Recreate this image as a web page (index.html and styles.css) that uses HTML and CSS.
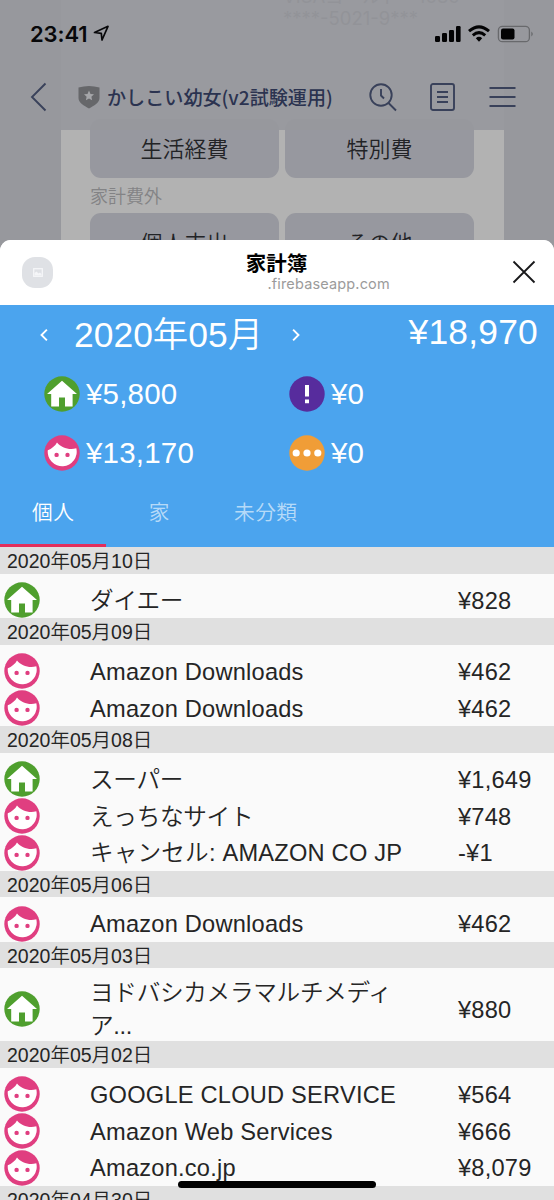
FILE: index.html
```html
<!DOCTYPE html>
<html lang="ja">
<head>
<meta charset="utf-8">
<title>家計簿</title>
<link rel="stylesheet" href="styles.css">
</head>
<body>
<svg width="0" height="0" class="defs">
  <symbol id="home" viewBox="0 0 36 36"><circle cx="18" cy="18" r="17.7" fill="#4f9f2e"/><path d="M18 4.800L3 18h4.200v12.500h7.800v-9h6v9h7.600V18H33z" fill="#fff"/></symbol>
  <symbol id="face" viewBox="0 0 36 36"><circle cx="18" cy="18" r="17.7" fill="#e03e80"/><path d="M3.800 15.200C7.500 13.600 11.300 10.800 13 7.400C17.200 12.500 24.800 15.300 32.300 13.300A14.500 14.500 0 1 1 3.800 15.200Z" fill="#fff"/><circle cx="12.600" cy="19.900" r="2.200" fill="#e03e80"/><circle cx="23.500" cy="19.900" r="2.200" fill="#e03e80"/></symbol>
</svg>
<div class="phone">
  <div class="chat">
    <div class="column">
      <p class="card-text">VISAゴールド　1089<br>****-5021-9***</p>
      <div class="choices"><span>生活経費</span><span>特別費</span></div>
      <p class="caption">家計費外</p>
      <div class="choices"><span>個人支出</span><span>その他</span></div>
    </div>
    <div class="topbar">
      <div class="status">
        <span class="time">23:41</span>
        <svg class="loc" width="17" height="17" viewBox="0 0 17 17"><path d="M1.500 7.500L15 1.300L9 15L8.300 8.300Z" fill="none" stroke="#08080a" stroke-width="1.700" stroke-linejoin="round"/></svg>
        <svg class="signals" width="102" height="20" viewBox="0 0 102 20"><g fill="#030304"><rect x="1" y="12" width="5" height="6" rx="1.200"/><rect x="8" y="9" width="5" height="9" rx="1.200"/><rect x="15" y="6" width="5" height="12" rx="1.200"/><rect x="22" y="2" width="4.600" height="16" rx="1.200"/><path d="M41.800 14.200a5 5 0 0 1 6.400 0L45 17.800z"/><rect x="67" y="4.500" width="13.500" height="11" rx="2"/></g><g fill="none" stroke="#030304" stroke-width="3"><path d="M35 7.200Q45 -1.400 55 7.200"/><path d="M38.800 11.300Q45 6 51.200 11.300"/></g><rect x="64.400" y="2.300" width="31" height="15.400" rx="4" fill="none" stroke="#68696c" stroke-width="1.300"/><path d="M97.300 7.500q3 2.500 0 5z" fill="#68696c"/></svg>
      </div>
      <div class="nav">
        <svg class="back" width="17" height="30" viewBox="0 0 17 30"><path d="M15.500 1.500L2 15L15.500 28.500" class="line"/></svg>
        <svg class="shield" width="22" height="24" viewBox="0 0 22 24"><path d="M.5 2.500Q11-.5 21.500 2.500V13c0 5-5.500 7.500-10.500 10.500C6 20.500.5 18 .5 13z" fill="#66676a"/><path d="M11 5.600l1.500 3.300 3.500.4-2.600 2.400.7 3.500-3.100-1.800-3.100 1.800.7-3.500L6 9.300l3.500-.4z" fill="#a5a6a9"/></svg>
        <h1>かしこい幼女(v2試験運用)</h1>
        <svg class="find" width="28" height="29" viewBox="0 0 28 29"><g class="line"><circle cx="12" cy="12" r="10.700"/><path d="M19.500 20L27 27.500M12 6v6.500l3 3"/></g></svg>
        <svg class="note" width="25" height="28" viewBox="0 0 25 28"><g class="line"><rect x="1" y="1" width="23" height="26" rx="2"/><path d="M7 9h11M7 14h11M7 19h11"/></g></svg>
        <svg class="menu" width="27" height="22" viewBox="0 0 27 22"><path d="M.5 2h26M.5 11h26M.5 20h26" class="line"/></svg>
      </div>
    </div>
  </div>
  <section class="sheet">
    <header class="sheet-head">
      <span class="avatar"><svg width="10" height="9" viewBox="0 0 10 9"><rect x=".7" y=".7" width="8.600" height="7.600" fill="none" stroke="#f5f6f8" stroke-width="1.300"/><path d="M1.500 7.500V5l2-1.500 2 2L7 4.500l1.500 1.500v1.500z" fill="#f5f6f8"/></svg></span>
      <div class="site"><h2>家計簿</h2><p>.firebaseapp.com</p></div>
      <svg class="close" width="24" height="24" viewBox="0 0 24 24"><path d="M1.500 1.500l21 21M22.500 1.500l-21 21" fill="none" stroke="#18181a" stroke-width="1.800"/></svg>
    </header>
    <div class="summary">
      <div class="month">
        <svg width="8" height="12" viewBox="0 0 8 12"><path d="M6.900 .6L1.500 6l5.400 5.400"/></svg>
        <span class="label">2020年05月</span>
        <svg width="8" height="12" viewBox="0 0 8 12"><path d="M1.100 .6L6.500 6l-5.400 5.400"/></svg>
        <span class="total">¥18,970</span>
      </div>
      <div class="totals">
        <div><svg class="badge"><use href="#home"/></svg>¥5,800</div>
        <div><svg class="badge" viewBox="0 0 36 36"><circle cx="18" cy="18" r="17.700" fill="#572c9d"/><path d="M16 9h4v11.500h-4zM16 23.500h4v3.700h-4z" fill="#fff"/></svg>¥0</div>
        <div><svg class="badge"><use href="#face"/></svg>¥13,170</div>
        <div><svg class="badge" viewBox="0 0 36 36"><circle cx="18" cy="18" r="17.700" fill="#f09d37"/><g fill="#fff"><circle cx="7.200" cy="18" r="3.600"/><circle cx="18" cy="18" r="3.600"/><circle cx="28.800" cy="18" r="3.600"/></g></svg>¥0</div>
      </div>
      <nav class="tabs"><span class="on">個人</span><span>家</span><span>未分類</span></nav>
    </div>
    <div class="list">
      <h3>2020年05月10日</h3>
      <ul>
        <li><svg class="badge"><use href="#home"/></svg><span class="ja">ダイエー</span><b>¥828</b></li>
      </ul>
      <h3>2020年05月09日</h3>
      <ul>
        <li><svg class="badge"><use href="#face"/></svg><span>Amazon Downloads</span><b>¥462</b></li>
        <li><svg class="badge"><use href="#face"/></svg><span>Amazon Downloads</span><b>¥462</b></li>
      </ul>
      <h3>2020年05月08日</h3>
      <ul>
        <li><svg class="badge"><use href="#home"/></svg><span class="ja">スーパー</span><b>¥1,649</b></li>
        <li><svg class="badge"><use href="#face"/></svg><span class="ja">えっちなサイト</span><b>¥748</b></li>
        <li><svg class="badge"><use href="#face"/></svg><span><span class="ja wide">キャンセル</span>: AMAZON CO JP</span><b>-¥1</b></li>
      </ul>
      <h3>2020年05月06日</h3>
      <ul>
        <li><svg class="badge"><use href="#face"/></svg><span>Amazon Downloads</span><b>¥462</b></li>
      </ul>
      <h3>2020年05月03日</h3>
      <ul>
        <li class="tall"><svg class="badge"><use href="#home"/></svg><span class="ja">ヨドバシカメラマルチメディ<br>ア...</span><b>¥880</b></li>
      </ul>
      <h3>2020年05月02日</h3>
      <ul>
        <li><svg class="badge"><use href="#face"/></svg><span>GOOGLE CLOUD SERVICE</span><b>¥564</b></li>
        <li><svg class="badge"><use href="#face"/></svg><span>Amazon Web Services</span><b>¥666</b></li>
        <li><svg class="badge"><use href="#face"/></svg><span>Amazon.co.jp</span><b>¥8,079</b></li>
      </ul>
      <h3>2020年04月30日</h3>
    </div>
  </section>
  <div class="home-bar"></div>
</div>
</body>
</html>
```
FILE: styles.css
```css
* { box-sizing: border-box; margin: 0; padding: 0; }
body { font-family: "Liberation Sans", "Noto Sans CJK JP", sans-serif; font-weight: 350; }
svg { display: block; flex: none; overflow: visible; }
.defs { position: absolute; }
.phone { position: relative; width: 554px; height: 1200px; overflow: hidden; background: #97989d; display: flex; flex-direction: column; }

.chat { position: relative; height: 240px; flex: none; }
.column { width: 443px; height: 264px; margin-left: 61px; padding: 0 29px; background: #b2b2b2; font-family: "Noto Sans CJK JP", sans-serif; color: #222326; overflow: hidden; }
.card-text { height: 134px; padding-left: 193px; margin-top: -15px; font: 18.500px/22px Inter, "Noto Sans CJK JP", sans-serif; color: #555; white-space: nowrap; }
.choices { display: grid; grid-template-columns: 189px 189px; gap: 6px; }
.choices span { height: 59px; padding-bottom: 4px; border-radius: 11px; background: #97989f; display: flex; align-items: center; justify-content: center; font-size: 22px; }
.caption { height: 35px; font-size: 18px; line-height: 34px; color: #838385; }

.topbar { position: absolute; inset: 0 0 auto; height: 130px; background: rgba(151, 152, 157, .93); }
.status { display: flex; height: 60px; padding: 8px 22px 0 30px; align-items: center; }
.time { font: 600 22px/26px Inter, sans-serif; color: #08080a; width: 63px; letter-spacing: -.1px; }
.loc { margin-top: -1px; }
.signals { margin-left: auto; margin-right: -4px; }
.nav { display: flex; height: 74px; align-items: center; padding-left: 30px; }
.line { fill: none; stroke: #39415a; stroke-width: 1.9; }
.shield { margin-left: 31px; }
.nav h1 { width: 262px; margin-left: 7px; font: 500 19.100px/28px "Noto Sans CJK JP", sans-serif; color: #2b3350; white-space: nowrap; }
.find { margin-top: 1px; }
.note { margin-left: 33px; }
.menu { margin-left: 34px; }

.sheet { position: relative; flex: 1; border-radius: 11px 11px 0 0; background: #fafafa; overflow: hidden; }
.sheet-head { display: flex; height: 65px; align-items: center; justify-content: space-between; padding: 0 18px 0 22px; background: #fff; }
.avatar { width: 31px; height: 31px; border-radius: 13px; background: #dfe1e5; display: flex; align-items: center; justify-content: center; }
.close { margin-top: -1px; }
.site { width: 226px; margin-right: 12px; margin-top: -2px; text-align: center; }
.site h2 { font: 700 20.500px/25px "Noto Sans CJK JP", sans-serif; color: #000; }
.site p { font: 14.500px/18px Inter, sans-serif; letter-spacing: .15px; color: #9b9b9b; padding-left: 104px; white-space: nowrap; }
.summary { height: 242px; background: #4ba4ee; color: #fff; }
.month { display: flex; height: 59px; align-items: center; padding: 0 16px 0 40px; }
.month path { fill: none; stroke: #fff; stroke-width: 1.900; }
.label { width: 217px; padding-left: 26px; font-size: 35.450px; line-height: 50px; white-space: nowrap; }
.month svg + .label + svg { margin-left: 27px; }
.total { margin-left: auto; margin-top: -5px; font-size: 35.450px; letter-spacing: .2px; }
.totals { display: grid; grid-template-columns: 245px 245px; grid-auto-rows: 59px; padding-left: 44px; }
.totals div { display: flex; align-items: center; gap: 6px; font-size: 29.500px; letter-spacing: .2px; }
.badge { width: 36px; height: 36px; }
.tabs { display: flex; height: 65px; }
.tabs span { width: 106.300px; line-height: 61px; text-align: center; font-size: 20.700px; letter-spacing: .5px; color: rgba(255, 255, 255, .62); border-bottom: 3px solid transparent; }
.tabs .on { color: #fff; border-color: #e22e5c; }

.list { color: #252525; }
.list h3 { height: 26.700px; padding-left: 7px; background: #e0e0e0; font-size: 19.500px; line-height: 28px; font-weight: 350; }
.list ul { list-style: none; padding-top: 7.400px; }
.list li { display: flex; height: 36.900px; align-items: center; padding: 1.400px 0 0 4px; font-size: 23.640px; line-height: 32.800px; letter-spacing: .22px; white-space: nowrap; }
.list li.tall { height: 65.200px; }
.list li > span { width: 368px; margin-left: 50px; padding-top: 2px; }
.list li b { font-weight: 400; padding-top: 2px; }
.ja { letter-spacing: -.3px; }
.ja.wide { letter-spacing: .15px; }
.home-bar { position: absolute; left: 178px; top: 1181px; width: 198px; height: 7px; border-radius: 4px; background: #000; }
```
